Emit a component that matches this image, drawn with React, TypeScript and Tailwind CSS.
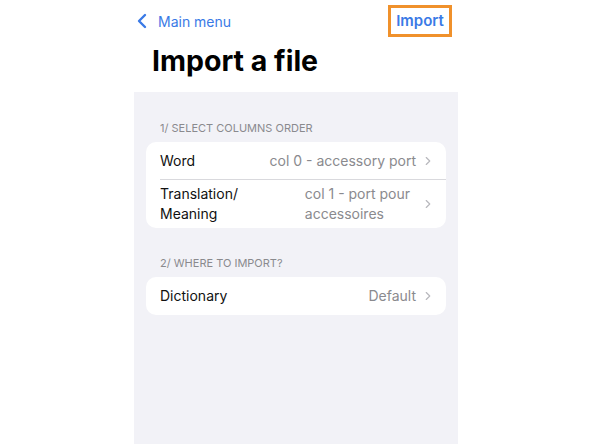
import { ChevronLeft, ChevronRight } from "lucide-react";

type Row = {
  label: string[];
  value: string[];
};

const columnRows: Row[] = [
  { label: ["Word"], value: ["col 0 - accessory port"] },
  { label: ["Translation/", "Meaning"], value: ["col 1 - port pour", "accessoires"] },
];

const targetRows: Row[] = [{ label: ["Dictionary"], value: ["Default"] }];

const SettingsRow = ({ row, last }: { row: Row; last: boolean }) => {
  const multi = row.label.length > 1;
  return (
    <div className="flex pl-[14px]">
      <div
        className={`flex flex-1 items-center justify-between pr-[11px] ${
          multi ? "h-[48px]" : "h-[38px]"
        } ${last ? "" : "border-b border-[#d9d9dd]"}`}
      >
        <div className="text-[14px] leading-[20px] text-[#111]">
          {row.label.map((l) => (
            <div key={l}>{l}</div>
          ))}
        </div>
        <div className="flex items-center gap-[5px]">
          <div
            className={`text-[14px] leading-[20px] text-[#8a8a8e] ${multi ? "pr-[6px]" : ""}`}
          >
            {row.value.map((v) => (
              <div key={v}>{v}</div>
            ))}
          </div>
          <ChevronRight className="h-[14px] w-[14px] text-[#b8b8bd]" strokeWidth={2} />
        </div>
      </div>
    </div>
  );
};

const Section = ({ title, rows }: { title: string; rows: Row[] }) => (
  <div>
    <div className="px-[26px] pb-[8px] text-[11px] uppercase leading-[12px] text-[#8a8a8e]">
      {title}
    </div>
    <div className="mx-[12px] overflow-hidden rounded-[10px] bg-white">
      {rows.map((r, i) => (
        <SettingsRow key={r.label.join(" ")} row={r} last={i === rows.length - 1} />
      ))}
    </div>
  </div>
);

export default function App() {
  return (
    <div
      className="h-[444px] w-[592px] overflow-hidden bg-white"
      style={{ fontFamily: "Inter, 'Liberation Sans', sans-serif" }}
    >
      <div className="mx-auto flex h-full w-[324px] flex-col">
        <div className="flex h-[42px] items-start justify-between pr-[6px] pt-[5px]">
          <button className="-ml-[4px] flex h-[32px] items-center gap-[4px] text-[14px] text-[#3a7ae6]">
            <ChevronLeft className="h-[24px] w-[24px]" strokeWidth={2.4} />
            <span>Main menu</span>
          </button>
          <button className="flex h-[32px] w-[64px] items-center justify-center border-[3px] border-[#f0912b] text-[15px] font-semibold text-[#3a7ae6]">
            Import
          </button>
        </div>
        <h1 className="h-[50px] pl-[18px] pt-[1px] text-[28.5px] font-bold leading-[36px] text-black">
          Import a file
        </h1>
        <div className="flex flex-1 flex-col gap-[29px] bg-[#f2f2f7] pt-[30px]">
          <Section title="1/ Select columns order" rows={columnRows} />
          <Section title="2/ Where to import?" rows={targetRows} />
        </div>
      </div>
    </div>
  );
}
